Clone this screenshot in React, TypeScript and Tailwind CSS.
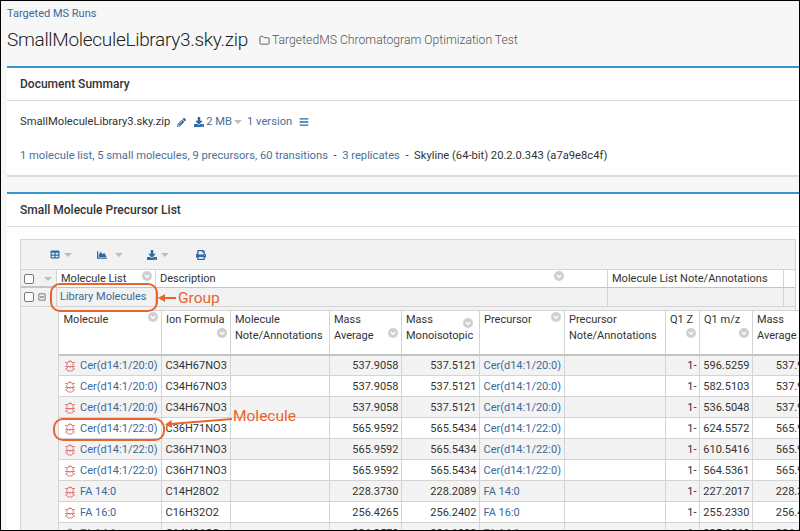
import { Folder } from 'lucide-react'
import { FaBars, FaChartArea, FaDownload, FaPencilAlt, FaPrint, FaRegMinusSquare, FaTable } from 'react-icons/fa'

const rows = [
  { name: 'Cer(d14:1/20:0)', formula: 'C34H67NO3', avg: '537.9058', mono: '537.5121', mz: '596.5259', avg2: '537.9058' },
  { name: 'Cer(d14:1/20:0)', formula: 'C34H67NO3', avg: '537.9058', mono: '537.5121', mz: '582.5103', avg2: '537.9058' },
  { name: 'Cer(d14:1/20:0)', formula: 'C34H67NO3', avg: '537.9058', mono: '537.5121', mz: '536.5048', avg2: '537.9058' },
  { name: 'Cer(d14:1/22:0)', formula: 'C36H71NO3', avg: '565.9592', mono: '565.5434', mz: '624.5572', avg2: '565.9592' },
  { name: 'Cer(d14:1/22:0)', formula: 'C36H71NO3', avg: '565.9592', mono: '565.5434', mz: '610.5416', avg2: '565.9592' },
  { name: 'Cer(d14:1/22:0)', formula: 'C36H71NO3', avg: '565.9592', mono: '565.5434', mz: '564.5361', avg2: '565.9592' },
  { name: 'FA 14:0', formula: 'C14H28O2', avg: '228.3730', mono: '228.2089', mz: '227.2017', avg2: '228.3730' },
  { name: 'FA 16:0', formula: 'C16H32O2', avg: '256.4265', mono: '256.2402', mz: '255.2330', avg2: '256.4265' },
  { name: 'FA 14:1', formula: 'C14H26O2', avg: '226.3570', mono: '226.1933', mz: '225.1860', avg2: '226.3570' },
]

const headers = [
  { w: 'w-[102px]', a: 'Molecule', b: '', icon: 'right-[3px] top-[1px]' },
  { w: 'w-[69px]', a: 'Ion Formula', b: '', icon: 'right-[3px] top-[17px]' },
  { w: 'w-[99px]', a: 'Molecule', b: 'Note/Annotations', icon: '' },
  { w: 'w-[72px]', a: 'Mass', b: 'Average', icon: 'right-[3px] top-[17px]' },
  { w: 'w-[78px]', a: 'Mass', b: 'Monoisotopic', icon: 'right-[6px] top-[7px]' },
  { w: 'w-[85px]', a: 'Precursor', b: '', icon: 'right-[3px] top-[1px]' },
  { w: 'w-[101px]', a: 'Precursor', b: 'Note/Annotations', icon: '' },
  { w: 'w-[34px]', a: 'Q1 Z', b: '', icon: 'right-[3px] top-[17px]' },
  { w: 'w-[53px]', a: 'Q1 m/z', b: '', icon: 'right-[3px] top-[17px]' },
  { w: 'w-[72px]', a: 'Mass', b: 'Average', icon: '' },
]

function FilterIcon({ className }: { className: string }) {
  return (
    <svg viewBox="0 0 10 10" className={`absolute h-[10px] w-[10px] ${className}`}>
      <circle cx="5" cy="5" r="5" fill="#cfcfcf" />
      <path d="M2.8 4 5 6.2 7.2 4" fill="none" stroke="#fff" strokeWidth="1.4" />
    </svg>
  )
}

function Caret({ className = '' }: { className?: string }) {
  return <span className={`inline-block h-0 w-0 border-x-[4px] border-t-[4px] border-x-transparent border-t-[#bdbdbd] ${className}`} />
}

function Checkbox() {
  return <span className="inline-block h-[10px] w-[10px] rounded-[2px] border border-[#777] bg-white" />
}

function MoleculeIcon() {
  return (
    <svg viewBox="0 0 12 12" className="h-[12px] w-[12px] shrink-0" fill="none" stroke="#d9605c" strokeWidth="0.8">
      <path d="M1 2.5h2.5L5 1l2 0 1.5 1.5H11M3.5 2.5 2.5 5l1.5 1.5h4L9.500 5l-1-2.500M5 1v1.500M7 1v1.500M1 6.500h3M8 6.500h3M4 6.500 2.500 9l1.500 2h4L9.500 9 8 6.500M1 9h1.500M9.500 9H11M6 6.500V8" />
    </svg>
  )
}

export default function App() {
  return (
    <div className="relative h-[531px] w-[800px] overflow-hidden border border-black bg-[#f7f7f7] font-[family-name:Roboto,sans-serif] text-[11.2px] text-[#333]">
      <div className="pl-[6px] pt-[6px] text-[11px] leading-[13px] text-[#3a6a9a]">Targeted MS Runs</div>
      <div className="mt-[7px] flex h-[27px] items-center pl-[6px]">
        <span className="text-[19px] font-light tracking-[-0.3px] text-[#222]">SmallMoleculeLibrary3.sky.zip</span>
        <Folder className="ml-[11px] h-[11px] w-[11px] text-[#555]" />
        <span className="ml-[2px] text-[12.2px] font-light text-[#555]">TargetedMS Chromatogram Optimization Test</span>
      </div>

      <section className="ml-[6px] mt-[12px] h-[111px] border-b-2 border-t-2 border-b-[#dcdcdc] border-t-[#3495d2] bg-white">
        <h2 className="flex h-[33px] items-center border-b border-[#dcdcdc] pl-[13px] text-[12px] font-medium text-[#333]">Document Summary</h2>
        <div className="mt-[14px] flex h-[14px] items-center pl-[13px]">
          <span>SmallMoleculeLibrary3.sky.zip</span>
          <FaPencilAlt className="ml-[7px] h-[9px] w-[9px] text-[#3a6a9a]" />
          <FaDownload className="ml-[8px] h-[10px] w-[10px] text-[#2b6aa3]" />
          <span className="ml-[2px] text-[#4a7199]">2 MB</span>
          <Caret className="ml-[2px]" />
          <span className="ml-[5px] text-[#4a7199]">1 version</span>
          <FaBars className="ml-[7px] h-[10px] w-[10px] text-[#2b6aa3]" />
        </div>
        <div className="mt-[20px] flex h-[14px] items-center whitespace-pre pl-[13px]">
          <span className="text-[#4a7199]">1 molecule list, 5 small molecules, 9 precursors, 60 transitions</span>
          <span>  -  </span>
          <span className="text-[#4a7199]">3 replicates</span>
          <span>  -  Skyline (64-bit) 20.2.0.343 (a7a9e8c4f)</span>
        </div>
      </section>

      <section className="ml-[6px] mt-[15px] h-[400px] overflow-hidden border-t-2 border-[#3495d2] bg-white text-[11px]">
        <h2 className="flex h-[33px] items-center border-b border-[#dcdcdc] pl-[13px] text-[12px] font-medium text-[#333]">Small Molecule Precursor List</h2>

        <div className="ml-[13px] mt-[12px] h-[400px] w-[776px] border-l border-r border-t border-[#d4d4d4] bg-[#f2f2f2]">
          <div className="flex h-[30px] items-center border-b border-[#d4d4d4] pl-[29px]">
            <FaTable className="h-[9px] w-[10px] text-[#2b6aa3]" />
            <Caret className="ml-[4px]" />
            <FaChartArea className="ml-[24px] h-[10px] w-[12px] text-[#2b6aa3]" />
            <Caret className="ml-[7px]" />
            <FaDownload className="ml-[24px] h-[10px] w-[10px] text-[#2b6aa3]" />
            <Caret className="ml-[4px]" />
            <FaPrint className="ml-[27px] h-[10px] w-[10px] text-[#2b6aa3]" />
          </div>

          <div className="grid h-[18px] grid-cols-[35px_99px_452px_176px_12px] border-b-2 border-[#c4c4c4]">
            <div className="flex items-center gap-[10px] pl-[3px]">
              <Checkbox />
              <Caret />
            </div>
            <div className="relative border-l border-[#d4d4d4] bg-white pl-[4px] leading-[17px]">
              Molecule List
              <FilterIcon className="right-[3px] top-[1px]" />
            </div>
            <div className="relative border-l border-[#d4d4d4] bg-white pl-[4px] leading-[17px]">
              Description
              <FilterIcon className="right-[43px] top-[1px]" />
            </div>
            <div className="border-l border-[#d4d4d4] bg-white pl-[4px] leading-[17px]">Molecule List Note/Annotations</div>
            <div className="border-l border-[#d4d4d4] bg-white" />
          </div>

          <div className="grid h-[19px] grid-cols-[35px_99px_452px_176px_12px] border-b border-[#d4d4d4]">
            <div className="flex items-center gap-[4px] pl-[3px]">
              <Checkbox />
              <FaRegMinusSquare className="h-[8px] w-[8px] text-[#555]" />
            </div>
            <div className="border-l border-[#d4d4d4] pl-[3px] leading-[18px] text-[#3a6a9a]">Library Molecules</div>
            <div className="border-l border-[#d4d4d4]" />
            <div className="border-l border-[#d4d4d4]" />
            <div className="border-l border-[#d4d4d4]" />
          </div>

          <div className="ml-[37px] mt-[3px] w-[766px] border-l border-[#d4d4d4]">
            <table className="w-[765px] table-fixed border-collapse">
              <thead>
                <tr className="h-[44px] border-b-2 border-t border-b-[#c4c4c4] border-t-[#d4d4d4] bg-white">
                  {headers.map((h, i) => (
                    <th key={i} className={`${h.w} relative border-r border-[#d4d4d4] pl-[4.5px] pt-[1px] text-left align-top text-[11px] font-normal leading-[16px] text-[#333]`}>
                      <div className="whitespace-nowrap">{h.a}</div>
                      {h.b && <div className="whitespace-nowrap">{h.b}</div>}
                      {h.icon && <FilterIcon className={h.icon} />}
                    </th>
                  ))}
                </tr>
              </thead>
              <tbody>
                {rows.map((r, i) => (
                  <tr key={i} className={`h-[21px] border-b border-[#d4d4d4] [&>td]:pt-[2px] ${i % 2 === 0 ? 'bg-[#f3f3f3]' : 'bg-white'}`}>
                    <td className="border-r border-[#d4d4d4] pl-[5px]">
                      <div className="flex items-center gap-[4px] whitespace-nowrap text-[#3a6a9a]">
                        <MoleculeIcon />
                        {r.name}
                      </div>
                    </td>
                    <td className="border-r border-[#d4d4d4] pl-[4px]">{r.formula}</td>
                    <td className="border-r border-[#d4d4d4]" />
                    <td className="border-r border-[#d4d4d4] pr-[2px] text-right">{r.avg}</td>
                    <td className="border-r border-[#d4d4d4] pr-[2px] text-right">{r.mono}</td>
                    <td className="whitespace-nowrap border-r border-[#d4d4d4] pl-[4px] text-[#3a6a9a]">{r.name}</td>
                    <td className="border-r border-[#d4d4d4]" />
                    <td className="border-r border-[#d4d4d4] pr-[2px] text-right">1-</td>
                    <td className="border-r border-[#d4d4d4] pr-[2px] text-right">{r.mz}</td>
                    <td className="pr-[2px] text-right">{r.avg2}</td>
                  </tr>
                ))}
              </tbody>
            </table>
          </div>
        </div>
      </section>

      {/* callouts on top of the grid */}
      <div className="absolute left-[49px] top-[282px] h-[29px] w-[108px] rounded-[10px] border-2 border-[#e8632f]" />
      <div className="absolute left-[52px] top-[417px] h-[23px] w-[112px] rounded-[10px] border-2 border-[#e8632f]" />
      <svg className="absolute left-[156px] top-[289px] h-[16px] w-[20px]" viewBox="0 0 20 16">
        <path d="M19 8H6" stroke="#e8632f" strokeWidth="2" />
        <path d="M1 8l7-4v8z" fill="#e8632f" />
      </svg>
      <svg className="absolute left-[163px] top-[413px] h-[16px] w-[70px]" viewBox="0 0 70 16">
        <path d="M68 5 6 10" stroke="#e8632f" strokeWidth="1.8" />
        <path d="M1 10.5l6.5-4.5.6 8z" fill="#e8632f" />
      </svg>
      <span className="absolute left-[177px] top-[288px] font-[family-name:'Open_Sans',sans-serif] text-[15.5px] leading-[18px] text-[#e8632f]">Group</span>
      <span className="absolute left-[232px] top-[406px] font-[family-name:'Open_Sans',sans-serif] text-[15.5px] leading-[18px] text-[#e8632f]">Molecule</span>
    </div>
  )
}
